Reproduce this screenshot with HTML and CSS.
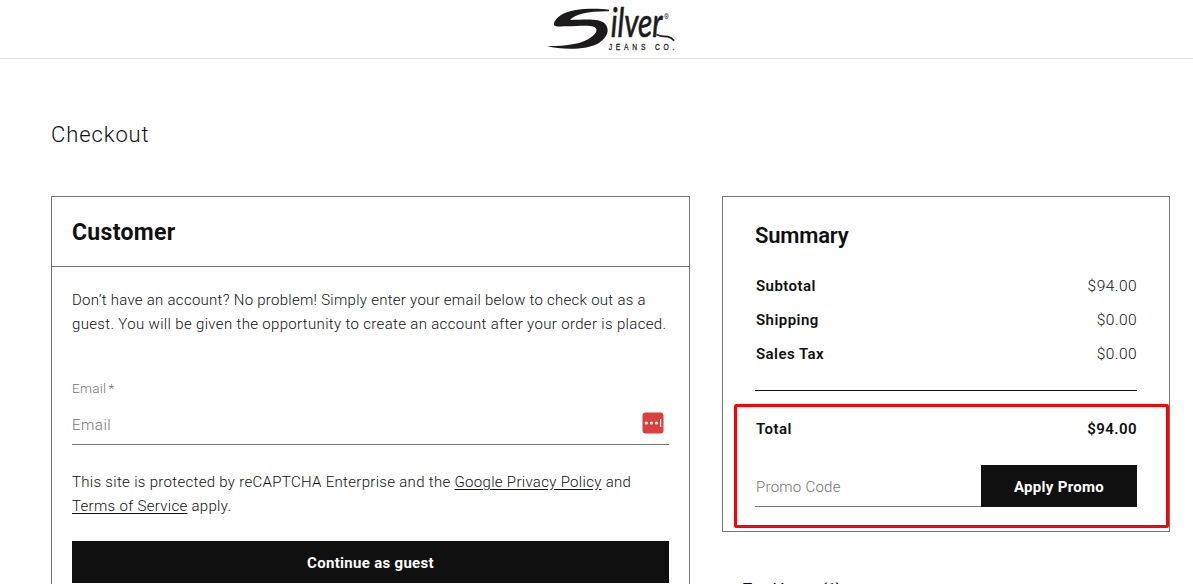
FILE: index.html
```
<!DOCTYPE html>
<html lang="en">
  <head>
    <meta charset="UTF-8">
    <title>Checkout</title>
    <link rel="stylesheet" href="styles.css">
  </head>
  <body>

    <header class="site-header">
      <svg class="logo" viewBox="0 0 450 174" role="img" aria-label="Silver Jeans Co.">
        <path d="M222 29 C180 24 105 24 74 48 C64 56 56 65 57 74 C58 80 72 80 96 79 C128 78 163 75 176 80 C190 86 186 99 168 112 C145 131 97 139 36 139 C80 149 158 151 193 128 C217 111 226 89 210 71 C196 55 153 58 105 60 C119 43 163 33 222 34 Z"/>
        <text class="logo-name" transform="translate(227 110) scale(.72 1)">ilver</text>
        <path class="logo-tail" d="M366 104 C377 112 386 107 398 110 C407 112 411 114 416 121"/>
        <text class="logo-reg" x="387" y="58">®</text>
        <text class="logo-sub" transform="translate(221 149) scale(.78 1)">JEANS CO.</text>
      </svg>
    </header>

    <main class="checkout">
      <h1>Checkout</h1>

      <div class="columns">
        <section class="customer">
          <h2>Customer</h2>
          <form class="customer-form">
            <p class="intro"><span class="line1">Don’t have an account? No problem! Simply enter your email below to check out as a</span><br><span class="line2">guest. You will be given the opportunity to create an account after your order is placed.</span></p>
            <label for="email">Email<span class="req">*</span></label>
            <div class="email-field">
              <input id="email" type="text" placeholder="Email">
              <svg class="pass-icon" viewBox="0 0 22 22">
                <rect x=".5" y=".5" width="21" height="21" rx="3"/>
                <circle cx="4.3" cy="11" r="1.6"/>
                <circle cx="9.4" cy="11" r="1.6"/>
                <circle cx="14.5" cy="11" r="1.6"/>
                <path d="M18.6 7v8"/>
              </svg>
            </div>
            <p class="legal">This site is protected by reCAPTCHA Enterprise and the <a href="#">Google Privacy Policy</a> and<br><a href="#">Terms of Service</a> apply.</p>
            <button type="button" class="btn">Continue as guest</button>
          </form>
        </section>

        <aside>
          <div class="summary">
            <h2>Summary</h2>
            <dl class="totals">
              <div><dt>Subtotal</dt><dd>$94.00</dd></div>
              <div><dt>Shipping</dt><dd>$0.00</dd></div>
              <div><dt>Sales Tax</dt><dd>$0.00</dd></div>
            </dl>
            <div class="total"><span>Total</span><span>$94.00</span></div>
            <div class="promo">
              <input type="text" placeholder="Promo Code">
              <button type="button" class="btn">Apply Promo</button>
            </div>
            <div class="highlight"></div>
          </div>
          <p class="items">Total Items (1)</p>
        </aside>
      </div>
    </main>

  </body>
</html>
```

FILE: styles.css
```
* {
	box-sizing: border-box;
	margin: 0;
	padding: 0;
}
html, body {
	height: 100%;
	overflow: hidden;
}
body {
	background-color: #fff;
	color: #101010;
	font-family: Roboto, "Liberation Sans", sans-serif;
	font-size: 15px;
	font-weight: 300;
	line-height: 24px;
}
input, button {
	font: inherit;
	border: 0;
	border-radius: 0;
	outline: 0;
}

/* header */
.site-header {
	height: 59px;
	padding-left: 535px;
	border-bottom: 1px solid #dfdfdf;
}
.logo {
	display: block;
	width: 150px;
	height: 58px;
	fill: #1c1a1b;
}
.logo-name {
	font-family: Lato, sans-serif;
	font-size: 124px;
	font-style: italic;
	font-weight: 400;
	stroke: #1c1a1b;
	stroke-width: 2;
}
.logo-tail {
	fill: none;
	stroke: #1c1a1b;
	stroke-width: 5;
	stroke-linecap: round;
}
.logo-reg {
	font-size: 19px;
	font-weight: 400;
}
.logo-sub {
	font-family: "Liberation Sans", sans-serif;
	font-size: 26px;
	font-weight: 400;
	stroke: #1c1a1b;
	stroke-width: 0.8;
	letter-spacing: 14.5px;
}

/* page */
.checkout {
	padding: 58px 23px 0 51px;
}
h1 {
	font-size: 22px;
	font-weight: 300;
	line-height: 36px;
	letter-spacing: 0.9px;
}
.columns {
	display: flex;
	justify-content: space-between;
	align-items: flex-start;
	margin-top: 43px;
}

/* customer */
.customer {
	width: 639px;
	height: 420px;
	border: 1px solid #757575;
}
.customer h2 {
	height: 70px;
	padding: 1px 0 0 20px;
	border-bottom: 1px solid #757575;
	font-size: 23px;
	font-weight: 700;
	line-height: 70px;
	letter-spacing: 0.3px;
}
.customer-form {
	padding: 21px 20px 0;
}
.customer-form p {
	white-space: nowrap;
}
.line1 {
	letter-spacing: 0.275px;
}
.line2 {
	letter-spacing: 0.335px;
}
label {
	display: block;
	margin-top: 40px;
	color: #757575;
	font-size: 13.5px;
	letter-spacing: 0.3px;
}
.req {
	margin-left: 2px;
}
.email-field {
	display: flex;
	align-items: center;
	height: 45px;
	padding: 2px 5px 0 0;
	border-bottom: 1px solid #757575;
}
.email-field input {
	flex: 1;
	height: 24px;
	margin-top: 4px;
	letter-spacing: 0.5px;
}
::placeholder {
	color: #757575;
	opacity: 1;
}
.pass-icon {
	width: 22px;
	height: 22px;
	fill: #fff;
}
.pass-icon rect {
	fill: #d8403b;
}
.pass-icon path {
	stroke: #fff;
	stroke-width: 1.2;
}
.legal {
	margin-top: 25px;
	letter-spacing: 0.31px;
}
a {
	color: #101010;
	text-underline-offset: 2px;
}
.btn {
	height: 42px;
	background-color: #101010;
	color: #fff;
	font-weight: 700;
	letter-spacing: 0.3px;
}
.customer .btn {
	display: block;
	width: 100%;
	margin-top: 23px;
	padding-top: 2px;
}

/* summary */
aside {
	width: 448px;
}
.summary {
	position: relative;
	height: 336px;
	padding: 23px 32px 0;
	border: 1px solid #757575;
}
.summary h2 {
	font-size: 22px;
	font-weight: 600;
	line-height: 32px;
	letter-spacing: -0.2px;
}
.totals {
	height: 139px;
	padding-top: 17px;
	border-bottom: 1px solid #101010;
}
.totals div, .total {
	display: flex;
	justify-content: space-between;
	height: 34px;
	padding-left: 1px;
	line-height: 34px;
	letter-spacing: 0.45px;
}
dd {
	font-size: 15.5px;
	font-weight: 300;
}
dt, .total {
	font-weight: 600;
}
.total {
	margin-top: 21px;
}
.promo {
	display: flex;
	margin-top: 19px;
}
.promo input {
	flex: 1;
	min-width: 0;
	padding: 2px 0 0 1px;
	border-bottom: 1px solid #757575;
	letter-spacing: 0.25px;
}
.promo .btn {
	width: 156px;
	padding-top: 2px;
}
.highlight {
	position: absolute;
	top: 207px;
	left: 11px;
	width: 435px;
	height: 124px;
	border: 3px solid #ff0000;
	border-radius: 2px;
}
.items {
	margin: 45px 0 0 21px;
	font-weight: 500;
}
```
